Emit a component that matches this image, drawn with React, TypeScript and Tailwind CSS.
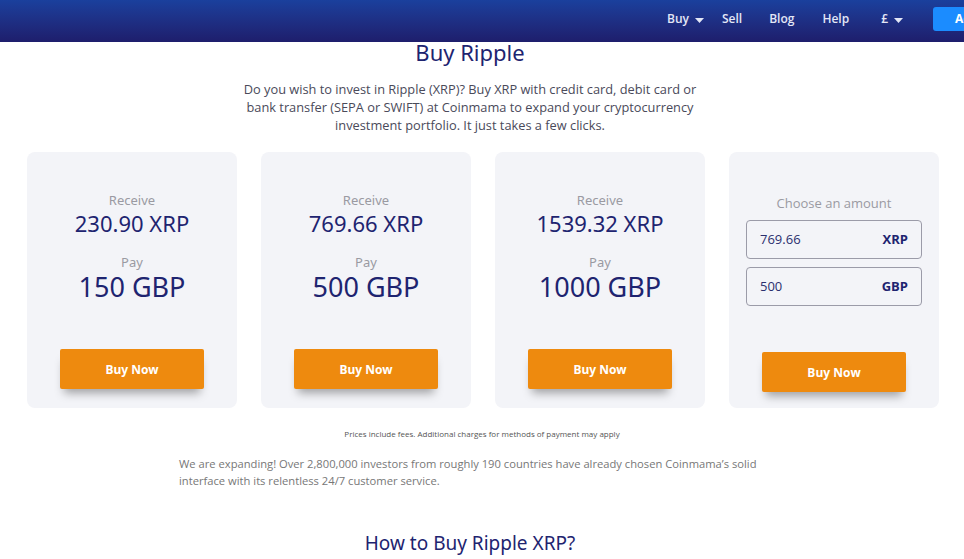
const offers = [
  { receive: "230.90 XRP", pay: "150 GBP" },
  { receive: "769.66 XRP", pay: "500 GBP" },
  { receive: "1539.32 XRP", pay: "1000 GBP" },
];

function Caret() {
  return (
    <svg width="9" height="5" viewBox="0 0 9 5" className="ml-1.5 mt-0.5">
      <path d="M0 0h9L4.5 5z" fill="currentColor" />
    </svg>
  );
}

function BuyButton({ className = "" }: { className?: string }) {
  return (
    <button
      className={`h-10 w-[144px] rounded-[2px] bg-[#ee8a0e] pt-[2px] text-[12px] font-bold text-white shadow-[0_8px_10px_-4px_rgba(0,0,0,0.35)] ${className}`}
    >
      Buy Now
    </button>
  );
}

export default function App() {
  return (
    <div className="relative h-[559px] overflow-hidden bg-white font-['Open_Sans',sans-serif]">
      {/* fixed top bar */}
      <header className="absolute inset-x-0 top-0 z-10 flex h-[42px] items-center bg-gradient-to-b from-[#1a409d] to-[#1e1e6c] pb-1 pl-[667px] text-[12px] font-semibold text-[#e3e7f6]">
        <span className="flex items-center">Buy<Caret /></span>
        <span className="ml-[18px]">Sell</span>
        <span className="ml-[27px]">Blog</span>
        <span className="ml-[28px]">Help</span>
        <span className="ml-[32px] flex items-center">£<Caret /></span>
        <span className="ml-[30px] flex h-[24px] w-[80px] shrink-0 items-center rounded-[3px] bg-[#1b8cff] pl-[22px] font-bold text-white">
          Account
        </span>
      </header>

      <main className="pt-[36px]">
        <h1 className="pr-6 text-center font-['Noto_Sans',sans-serif] text-[22px] leading-8 text-[#1e2470]">
          Buy Ripple
        </h1>
        <p className="mx-auto mt-[12px] w-[494px] pr-6 text-center text-[12.8px] leading-[18px] text-[#4a4a5a]">
          Do you wish to invest in Ripple (XRP)? Buy XRP with credit card, debit card or bank
          transfer (SEPA or SWIFT) at Coinmama to expand your cryptocurrency investment
          portfolio. It just takes a few clicks.
        </p>

        <div className="ml-[27px] mt-[18px] grid w-[912px] grid-cols-4 gap-6">
          {offers.map((o) => (
            <div
              key={o.pay}
              className="flex h-[256px] flex-col items-center rounded-lg bg-[#f3f4f8] pb-[19px] pt-[39px] font-['Noto_Sans',sans-serif]"
            >
              <span className="text-[13px] leading-[18px] text-[#9a9aa2]">Receive</span>
              <span className="text-[22px] leading-7 text-[#1e2470]">{o.receive}</span>
              <span className="mt-[16px] text-[13px] leading-[18px] text-[#9a9aa2]">Pay</span>
              <span className="text-[27px] leading-[32px] text-[#1e2470]">{o.pay}</span>
              <BuyButton className="mt-auto" />
            </div>
          ))}

          <div className="flex h-[256px] flex-col items-center rounded-lg bg-[#f3f4f8] px-[17px] pb-[16px] pt-[42px]">
            <span className="text-[13px] leading-[18px] text-[#9a9aa2]">Choose an amount</span>
            <div className="mt-[8px] flex h-[39px] w-full items-center justify-between rounded-[4px] border border-[#9b9ba8] px-[13px] text-[13px]">
              <span className="text-[#2b2f6e]">769.66</span>
              <span className="font-bold text-[#1e2470]">XRP</span>
            </div>
            <div className="mt-[8px] flex h-[39px] w-full items-center justify-between rounded-[4px] border border-[#9b9ba8] px-[13px] text-[13px]">
              <span className="text-[#2b2f6e]">500</span>
              <span className="font-bold text-[#1e2470]">GBP</span>
            </div>
            <BuyButton className="mt-auto" />
          </div>
        </div>

        <p className="mt-[20px] text-center text-[8px] leading-[12px] text-[#555]">
          Prices include fees. Additional charges for methods of payment may apply
        </p>

        <p className="ml-[179px] mt-[15px] w-[600px] text-[11.2px] leading-[17px] text-[#777]">
          We are expanding! Over 2,800,000 investors from roughly 190 countries have already
          chosen Coinmama’s solid interface with its relentless 24/7 customer service.
        </p>

        <h2 className="mt-[40px] pr-6 text-center font-['Noto_Sans',sans-serif] text-[19px] leading-7 text-[#1e2470]">
          How to Buy Ripple XRP?
        </h2>
      </main>
    </div>
  );
}
